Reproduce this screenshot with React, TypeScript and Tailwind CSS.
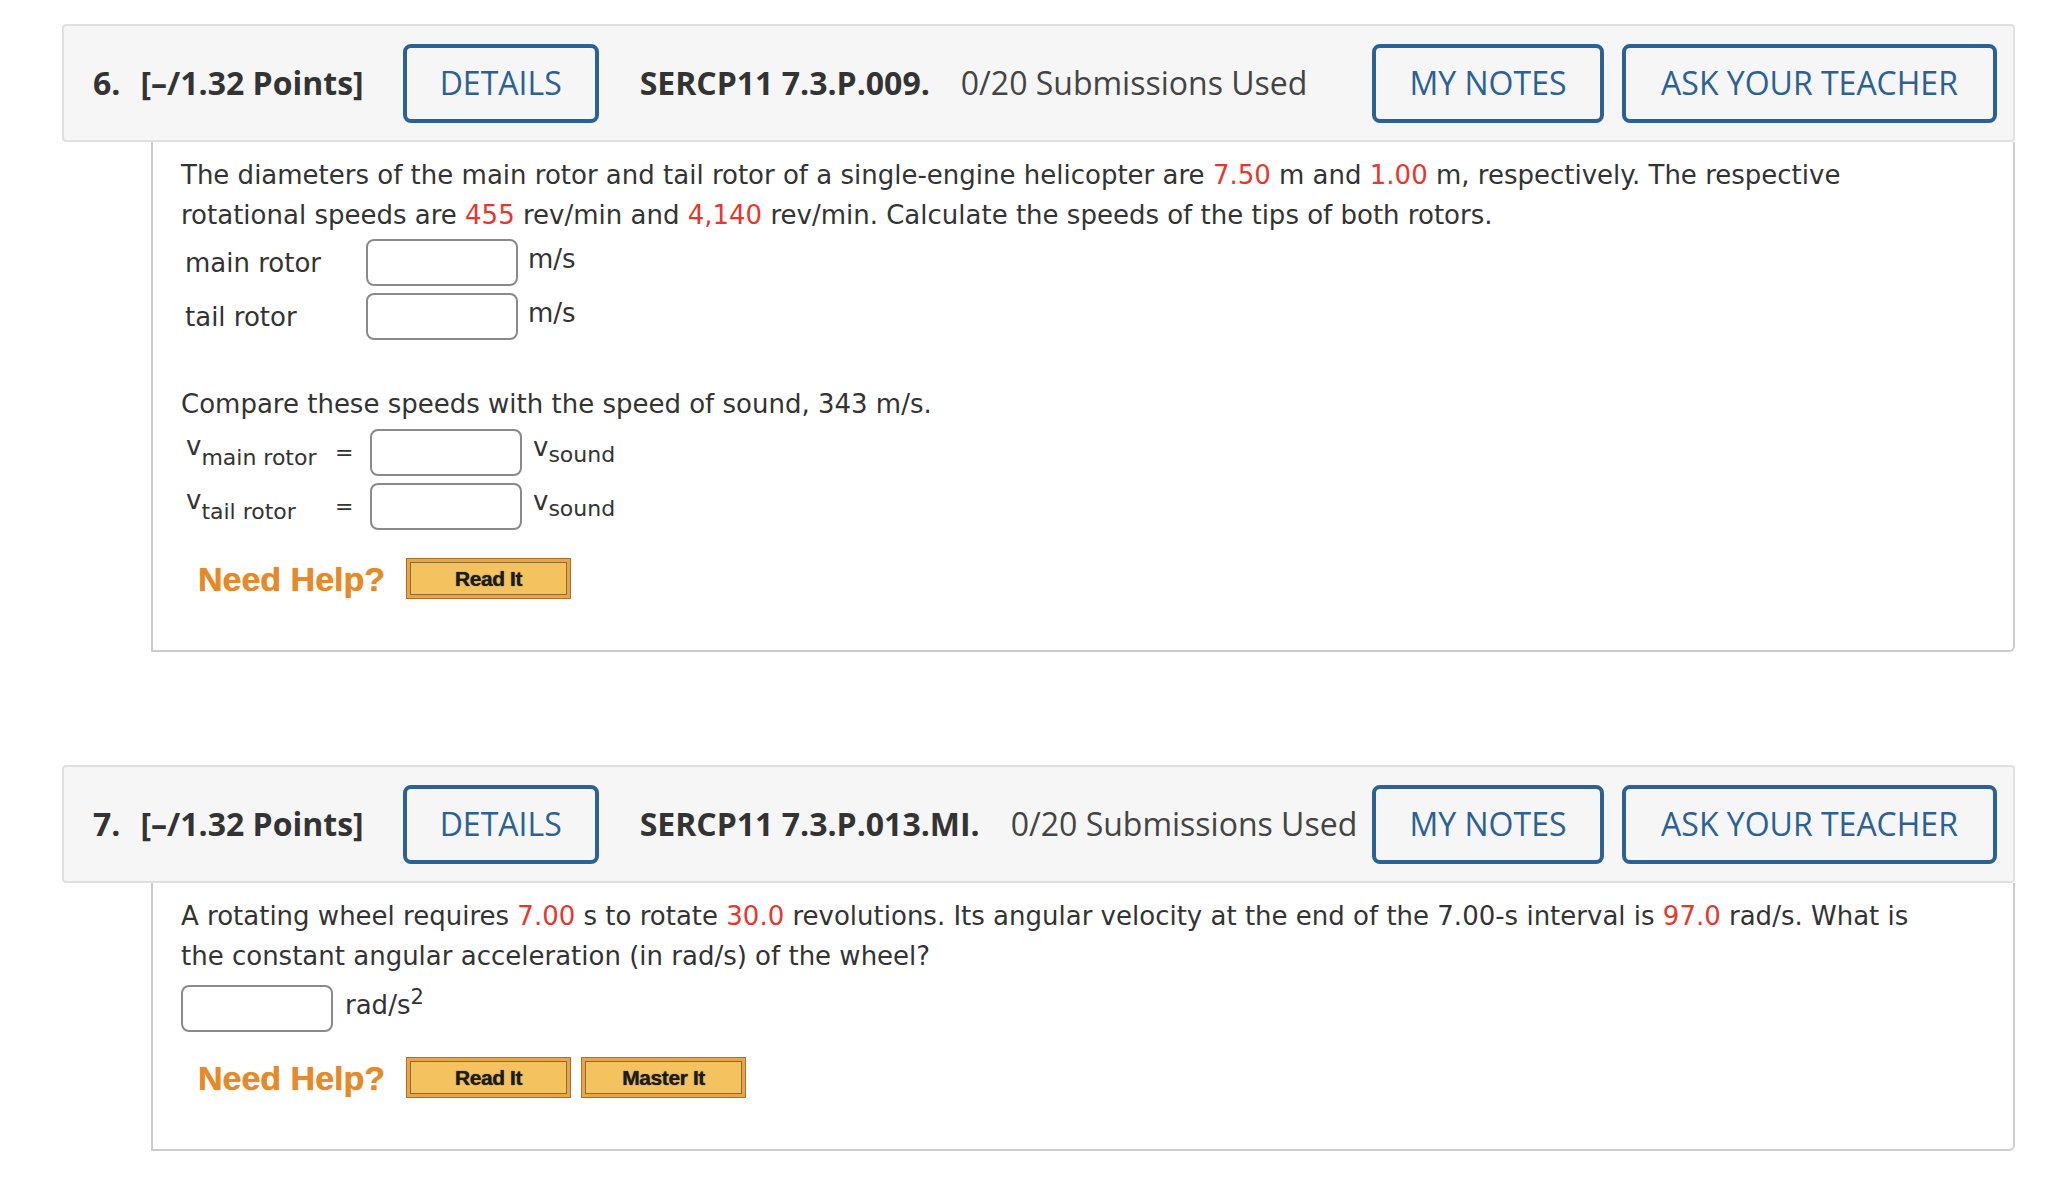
import type { ReactNode } from "react";

const red = "text-[#e8362c]";

function OutlineButton({ label, width }: { label: string; width: string }) {
  return (
    <button
      type="button"
      className={`flex h-[79px] ${width} items-center justify-center rounded-[8px] border-4 border-[#2b6195] bg-[#f6f6f6] text-[32px] text-[#2b6195]`}
    >
      {label}
    </button>
  );
}

function QuestionHeader({ num, code }: { num: string; code: string }) {
  return (
    <div className="flex h-[118px] items-center justify-between rounded-[4px] border-2 border-[#e0e0e0] bg-[#f6f6f6] pl-[29px] pr-[16px] font-['Open_Sans',sans-serif] text-[32px] text-[#333]">
      <div className="flex items-center whitespace-nowrap">
        <span className="font-bold">{num}.</span>
        <span className="ml-[20px] font-bold">[–/1.32 Points]</span>
        <div className="ml-[39px]">
          <OutlineButton label="DETAILS" width="w-[196px]" />
        </div>
        <span className="ml-[41px] font-bold">{code}</span>
        <span className="ml-[31px] text-[#444]">0/20 Submissions Used</span>
      </div>
      <div className="flex items-center gap-[18px]">
        <OutlineButton label="MY NOTES" width="w-[232px]" />
        <OutlineButton label="ASK YOUR TEACHER" width="w-[375px]" />
      </div>
    </div>
  );
}

function HelpButton({ label }: { label: string }) {
  return (
    <div className="h-[41px] w-[165px] border border-[#b0702c] bg-[#eaa547] p-[3px]">
      <div className="flex h-full items-center justify-center border border-[#8a6a3c] bg-[#f4c25e] font-['Liberation_Sans',Arial,sans-serif] text-[21px] font-bold tracking-[-0.4px] text-[#1c1c1c] [text-shadow:0_0_1px_#333]">
        {label}
      </div>
    </div>
  );
}

function NeedHelp({ children }: { children: ReactNode }) {
  return (
    <div className="flex items-center pl-[17px]">
      <span className="mr-[21px] font-['Liberation_Sans',Arial,sans-serif] text-[34px] font-bold text-[#e58a2c] [text-shadow:0_0_1px_#e58a2c]">
        Need Help?
      </span>
      <div className="flex gap-[10px]">{children}</div>
    </div>
  );
}

function AnswerBox() {
  return <div className="h-[47px] w-[152px] shrink-0 rounded-[8px] border-2 border-[#8a8a8a] bg-white" />;
}

function QuestionBody({ children }: { children: ReactNode }) {
  return (
    <div className="ml-[89px] rounded-br-[6px] border-2 border-t-0 border-[#cccccc] pb-[51px] pl-[28px] pr-[58px] pt-[13px] font-['DejaVu_Sans',Verdana,sans-serif] text-[26px] leading-[40px] text-[#333]">
      {children}
    </div>
  );
}

export default function App() {
  return (
    <div className="min-h-screen bg-white pl-[62px] pr-[33px] pt-[24px]">
      <QuestionHeader num="6" code="SERCP11 7.3.P.009." />
      <QuestionBody>
        <p>
          The diameters of the main rotor and tail rotor of a single-engine helicopter are{" "}
          <span className={red}>7.50</span> m and <span className={red}>1.00</span> m, respectively.
          The respective rotational speeds are <span className={red}>455</span> rev/min and{" "}
          <span className={red}>4,140</span> rev/min. Calculate the speeds of the tips of both rotors.
        </p>
        <div className="mt-[4px] flex flex-col gap-[7px]">
          {["main rotor", "tail rotor"].map((label) => (
            <div key={label} className="flex h-[47px]">
              <div className="flex w-[185px] items-center pl-[4px]">{label}</div>
              <AnswerBox />
              <span className="ml-[10px]">m/s</span>
            </div>
          ))}
        </div>

        <p className="mt-[44px]">Compare these speeds with the speed of sound, 343 m/s.</p>
        <div className="mt-[5px] flex flex-col gap-[7px]">
          {["main rotor", "tail rotor"].map((label) => (
            <div key={label} className="flex h-[47px]">
              <div className="flex w-[150px] items-center pl-[5px]">
                <span className="-mt-[14px]">v</span>
                <span className="mt-[10px] text-[22px]">{label}</span>
              </div>
              <div className="flex w-[39px] items-center pl-[4px] text-[22px]">=</div>
              <AnswerBox />
              <div className="ml-[11px] flex">
                <span className="-mt-[2px]">v</span>
                <span className="mt-[6px] text-[22px]">sound</span>
              </div>
            </div>
          ))}
        </div>

        <div className="mt-[28px]">
          <NeedHelp>
            <HelpButton label="Read It" />
          </NeedHelp>
        </div>
      </QuestionBody>

      <div className="mt-[113px]">
        <QuestionHeader num="7" code="SERCP11 7.3.P.013.MI." />
      </div>
      <QuestionBody>
        <p>
          A rotating wheel requires <span className={red}>7.00</span> s to rotate{" "}
          <span className={red}>30.0</span> revolutions. Its angular velocity at the end of the 7.00-s
          interval is <span className={red}>97.0</span> rad/s. What is the constant angular acceleration
          (in rad/s) of the wheel?
        </p>
        <div className="mt-[9px] flex h-[47px]">
          <AnswerBox />
          <span className="ml-[12px]">
            rad/s<sup className="text-[21px]">2</sup>
          </span>
        </div>
        <div className="mt-[25px]">
          <NeedHelp>
            <HelpButton label="Read It" />
            <HelpButton label="Master It" />
          </NeedHelp>
        </div>
      </QuestionBody>
    </div>
  );
}
